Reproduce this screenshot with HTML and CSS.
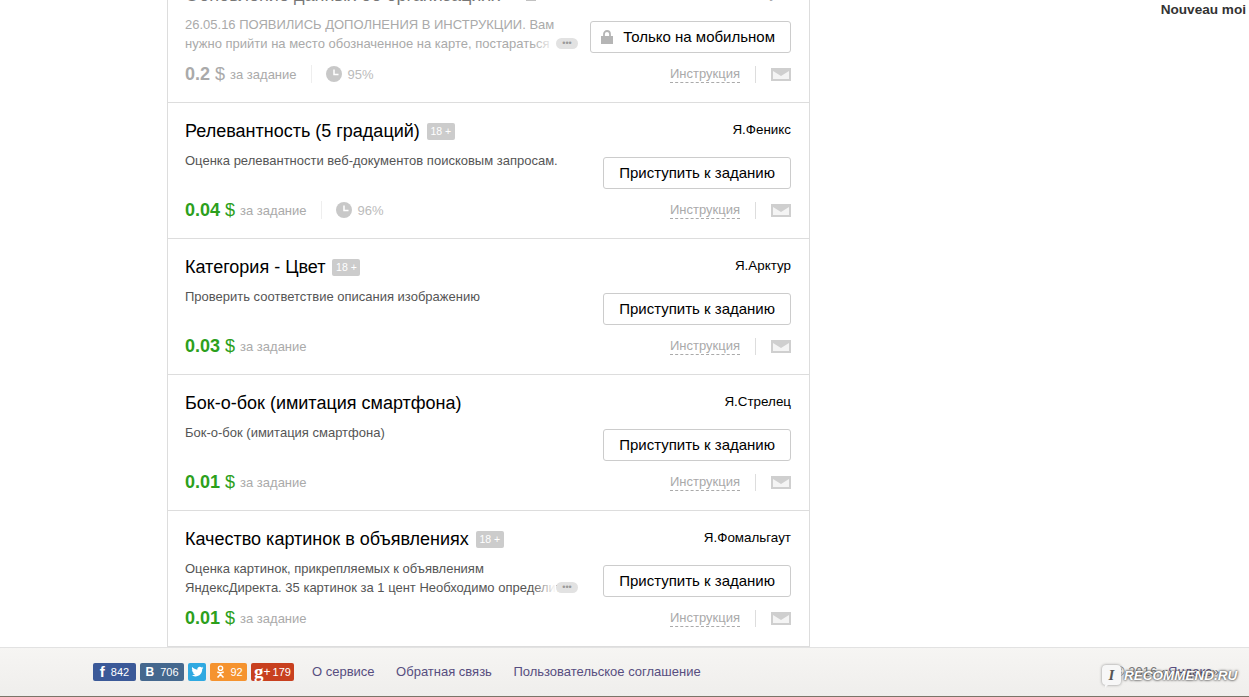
FILE: index.html

```html
<!doctype html>
<html lang="ru">
<head>
<meta charset="utf-8">
<meta name="viewport" content="width=device-width, initial-scale=1">
<title>Задания</title>
<link rel="stylesheet" href="styles.css">
</head>
<body>
<svg class="sprite" aria-hidden="true">
	<symbol id="clock" viewBox="0 0 16 16"><circle cx="8" cy="8" r="8" fill="#c8c8c8"/><path d="M8 3.500V8.500H12.500" fill="none" stroke="#fff" stroke-width="1.500"/></symbol>
	<symbol id="mail" viewBox="0 0 20 13"><path d="M0 0H20V13H0Z" fill="#cfcfcf"/><path d="M2 3L10 8L18 3V11H2Z" fill="#f4f4f4"/></symbol>
	<symbol id="lock" viewBox="0 0 12 14"><path d="M3 6V4a3 3 0 0 1 6 0V6" fill="none" stroke="#b5b5b5" stroke-width="1.800"/><path d="M0 6H12V14H0Z" fill="#b5b5b5"/></symbol>
</svg>

<div class="page">
<main class="list">

<section class="task off">
	<div class="task_head"><h2>Обновление данных об организациях</h2><svg class="lock_small"><use href="#lock"/></svg><span class="author">Я.Луна</span></div>
	<div class="task_body">
		<div class="desc"><span>26.05.16 ПОЯВИЛИСЬ ДОПОЛНЕНИЯ В ИНСТРУКЦИИ. Вам</span><span>нужно прийти на место обозначенное на карте, постараться</span><i class="more">•••</i></div>
		<a class="btn mobile"><svg class="lock"><use href="#lock"/></svg>Только на мобильном</a>
	</div>
	<div class="task_foot">
		<span class="price"><b>0.2</b> $</span><span class="per">за задание</span>
		<span class="rating"><svg class="clock"><use href="#clock"/></svg>95%</span>
		<a class="instr">Инструкция</a><svg class="mail"><use href="#mail"/></svg>
	</div>
</section>

<section class="task">
	<div class="task_head"><h2>Релевантность (5 градаций)</h2><span class="age">18 +</span><span class="author">Я.Феникс</span></div>
	<div class="task_body">
		<div class="desc"><span>Оценка релевантности веб-документов поисковым запросам.</span></div>
		<a class="btn">Приступить к заданию</a>
	</div>
	<div class="task_foot">
		<span class="price"><b>0.04</b> $</span><span class="per">за задание</span>
		<span class="rating"><svg class="clock"><use href="#clock"/></svg>96%</span>
		<a class="instr">Инструкция</a><svg class="mail"><use href="#mail"/></svg>
	</div>
</section>

<section class="task">
	<div class="task_head"><h2>Категория - Цвет</h2><span class="age">18 +</span><span class="author">Я.Арктур</span></div>
	<div class="task_body">
		<div class="desc"><span>Проверить соответствие описания изображению</span></div>
		<a class="btn">Приступить к заданию</a>
	</div>
	<div class="task_foot">
		<span class="price"><b>0.03</b> $</span><span class="per">за задание</span>
		<a class="instr">Инструкция</a><svg class="mail"><use href="#mail"/></svg>
	</div>
</section>

<section class="task">
	<div class="task_head"><h2>Бок-о-бок (имитация смартфона)</h2><span class="author">Я.Стрелец</span></div>
	<div class="task_body">
		<div class="desc"><span>Бок-о-бок (имитация смартфона)</span></div>
		<a class="btn">Приступить к заданию</a>
	</div>
	<div class="task_foot">
		<span class="price"><b>0.01</b> $</span><span class="per">за задание</span>
		<a class="instr">Инструкция</a><svg class="mail"><use href="#mail"/></svg>
	</div>
</section>

<section class="task">
	<div class="task_head"><h2>Качество картинок в объявлениях</h2><span class="age">18 +</span><span class="author">Я.Фомальгаут</span></div>
	<div class="task_body">
		<div class="desc"><span>Оценка картинок, прикрепляемых к объявлениям</span><span>ЯндексДиректа. 35 картинок за 1 цент Необходимо определить</span><i class="more">•••</i></div>
		<a class="btn">Приступить к заданию</a>
	</div>
	<div class="task_foot">
		<span class="price"><b>0.01</b> $</span><span class="per">за задание</span>
		<a class="instr">Инструкция</a><svg class="mail"><use href="#mail"/></svg>
	</div>
</section>

</main>
<aside class="side">Nouveau moi</aside>
</div>

<footer class="foot">
	<div class="social">
		<a class="soc fb"><b>f</b>842</a>
		<a class="soc vk"><b>В</b>706</a>
		<a class="soc tw"><svg viewBox="0 0 24 24"><path fill="#fff" d="M23 5.100c-.8.400-1.700.600-2.600.700.900-.600 1.600-1.400 2-2.500-.900.500-1.800.900-2.900 1.100C18.700 3.500 17.500 3 16.200 3c-2.500 0-4.600 2-4.600 4.600 0 .400 0 .700.100 1C7.900 8.400 4.500 6.600 2.300 3.800c-.400.700-.600 1.500-.6 2.300 0 1.600.800 3 2 3.800-.800 0-1.500-.200-2.100-.600v.100c0 2.200 1.600 4.100 3.700 4.500-.400.100-.800.200-1.200.200-.300 0-.600 0-.900-.1.600 1.800 2.300 3.200 4.300 3.200-1.600 1.200-3.600 2-5.700 2-.400 0-.700 0-1.100-.1C2.800 20.300 5.200 21 7.800 21c8.300 0 12.900-6.900 12.900-12.900v-.6c.900-.600 1.700-1.400 2.300-2.400z"/></svg></a>
		<a class="soc ok"><svg viewBox="0 0 10 14"><circle cx="5" cy="3.500" r="2.300" fill="none" stroke="#fff" stroke-width="1.500"/><path d="M1.500 7.500Q5 9.500 8.500 7.500M5 8.500V10M1.800 13.500L5 10L8.200 13.500" fill="none" stroke="#fff" stroke-width="1.600"/></svg>92</a>
		<a class="soc gp"><b>g</b><sup>+</sup>179</a>
	</div>
	<nav class="foot_links">
		<a>О сервисе</a>
		<a>Обратная связь</a>
		<a>Пользовательское соглашение</a>
	</nav>
	<div class="copy">© 2016 «<a>Яндекс</a>»</div>
	<div class="mark"><span class="mark_i">I</span>RECOMMEND.RU</div>
</footer>
</body>
</html>
```

FILE: styles.css

```css
html, body { margin:0; height:100%; overflow:hidden }
body { display:flex; flex-direction:column; background:#fff; color:#000; font-family:"Liberation Sans", Arial, sans-serif }
a { cursor:pointer }
h2 { margin:0; font-size:18px; font-weight:normal; line-height:22px; white-space:nowrap }
.sprite { display:none }

.page { flex:1; display:flex; justify-content:space-between; min-height:0; overflow:hidden; padding-left:167px }
.list { width:641px; margin-top:-33px; border:solid #ddd; border-width:0 1px; flex:none; align-self:flex-start }
.side { font-size:13.600px; font-weight:bold; color:#333; padding:2px 3px 0 0; line-height:15px }

.task { box-sizing:border-box; height:136px; padding:17px 18px 0 17px; border-bottom:1px solid #ddd; display:flex; flex-direction:column }
.task_head { display:flex; align-items:center; height:22px; gap:7px }
.age { background:#ccc; color:#fff; font-size:10.500px; line-height:17px; width:28px; text-align:center; border-radius:2px }
.author { margin-left:auto; font-size:13.400px; position:relative; top:-2px }
.lock_small { width:10px; height:12px; margin-left:19px }

.task_body { display:flex; justify-content:space-between; padding-top:9px; box-sizing:border-box; height:48px }
.desc { position:relative; width:393px; font-size:13px; line-height:19px; color:#555; height:38px; flex:none; margin-right:auto }
.desc span { display:block; width:374px; white-space:nowrap; overflow:hidden }
.more { position:absolute; right:0; top:23px; width:22px; height:11px; line-height:10px; border-radius:6px; background:#e2e2e2; color:#999; font-size:9px; font-style:normal; text-align:center }
.more::before { content:""; position:absolute; right:100%; top:-5px; width:24px; height:19px; background:linear-gradient(to right, rgba(255,255,255,0), #fff) }
.btn { box-sizing:border-box; height:32px; margin-top:6px; padding:0 15px; border:1px solid #ccc; border-radius:3px; background:#fff; color:#000; font-size:15px; line-height:30px; white-space:nowrap; display:flex; align-items:center }
.mobile { padding-left:10px }
.lock { width:12px; height:14px; margin-right:10px }

.task_foot { display:flex; align-items:center; height:20px; margin-top:10px; font-size:13px; color:#aaa }
.price { font-size:18px; color:#2ca01c }
.per { margin-left:5px }
.rating { display:flex; align-items:center; margin-left:14px; padding-left:14px; border-left:1px solid #eee; height:18px; color:#bbb }
.clock { width:16px; height:16px; margin-right:6px }
.instr { margin-left:auto; border-bottom:1px dashed #aaa; line-height:17px }
.mail { width:20px; height:13px; margin-left:15px; padding-left:15px; border-left:1px solid #ddd; box-sizing:content-box; padding-block:2px }

.off, .off .desc { color:#aaa }
.off h2 { color:#777 }
.off .price { color:#aaa }

.foot { position:relative; flex:none; height:50px; box-sizing:border-box; border-top:1px solid #e2e2e2; border-bottom:1px solid #7b7468; background:linear-gradient(#f6f5f3, #efeeec); display:flex; align-items:center; padding:0 30px 1px 93px; font-size:13px }
.social { display:flex; gap:4px }
.soc { display:flex; align-items:center; justify-content:center; gap:6px; height:18px; border-radius:2px; color:#fff; font-size:11px; overflow:hidden }
.soc b { font-size:15px }
.soc svg { height:13px; width:13px }
.fb { width:43px; background:#3b5998 }
.vk { width:44px; background:#45688e }
.vk b { font-size:12px }
.tw { width:18px; background:#2fa9e1 }
.ok { width:37px; background:#f5932f; gap:3px }
.gp { width:43px; background:#c8401f; gap:0 }
.gp b { font-family:"Liberation Serif", serif; font-size:19px }
.gp sup { font-size:12px; line-height:10px; margin-right:2px }
.foot_links { display:flex; gap:21.500px; margin-left:18px; color:#574e80 }
.copy { margin-left:auto; color:#777 }
.copy a { color:#574e80 }
.mark { position:absolute; left:1102px; top:17px; display:flex; align-items:center; gap:3px; color:#fff; font-size:13.500px; font-weight:bold; font-style:italic; text-shadow:0 0 3px #444, 0 0 2px #444 }
.mark_i { position:relative; width:19px; height:20px; border-radius:4px; background:#f7f7f7; color:#555; text-shadow:none; font-family:"Liberation Serif", serif; font-size:15px; text-align:center; line-height:20px; box-shadow:0 0 3px #888 }
.mark_i::after { content:""; position:absolute; left:3px; top:100%; border:solid transparent; border-width:3px 3px 0 0; border-top-color:#f7f7f7 }
```
